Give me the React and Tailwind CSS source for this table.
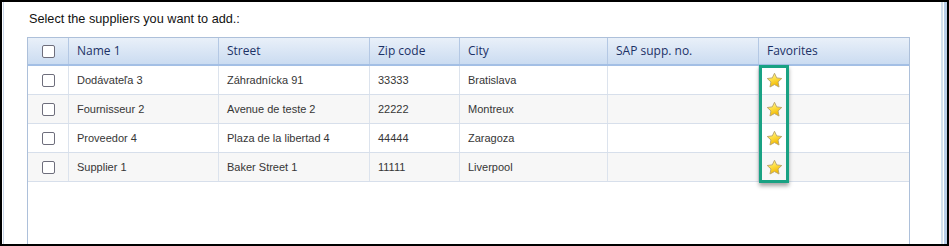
import React from 'react';

const suppliers = [
  { name: 'Dodávateľa 3', street: 'Záhradnícka 91', zip: '33333', city: 'Bratislava' },
  { name: 'Fournisseur 2', street: 'Avenue de teste 2', zip: '22222', city: 'Montreux' },
  { name: 'Proveedor 4', street: 'Plaza de la libertad 4', zip: '44444', city: 'Zaragoza' },
  { name: 'Supplier 1', street: 'Baker Street 1', zip: '11111', city: 'Liverpool' }
];

const cols = 'grid grid-cols-[41px_150px_151px_90px_148px_151px_1fr]';

const Checkbox = () => (
  <span className="block w-[13px] h-[13px] rounded-[2px] border-[1.5px] border-[#6e6e7c] bg-white" />
);

const Star = ({ id }) => (
  <svg width="17" height="17" viewBox="0 0 24 24">
    <defs>
      <linearGradient id={`sg${id}`} x1="0" y1="0" x2="0.4" y2="1">
        <stop offset="0" stopColor="#fff9c4" />
        <stop offset="0.45" stopColor="#ffe34d" />
        <stop offset="1" stopColor="#f2b800" />
      </linearGradient>
    </defs>
    <path
      d="M12 1.8l3.1 6.5 7.1.9-5.2 4.9 1.4 7.1L12 17.7l-6.4 3.5 1.4-7.1-5.2-4.9 7.1-.9z"
      fill={`url(#sg${id})`}
      stroke="#b8a46a"
      strokeWidth="1.3"
      strokeLinejoin="round"
    />
  </svg>
);

const App = () => {
  const headCell = 'flex items-center pl-[8px] border-r border-[#b4c8e4] text-[#1c3166]';
  const bodyCell = 'flex items-center pl-[8px] border-r border-[#dce3ed]';

  return (
    <div className="w-[949px] h-[246px] border-2 border-black bg-white flex overflow-hidden">
      <div className="w-px bg-white" />
      <div className="w-px bg-[#c9d6e8]" />

      <div className="flex-1 flex flex-col" style={{ fontFamily: '"Liberation Sans", Arial, sans-serif' }}>
        <div className="h-[35px] pl-[25px] pt-[10px] text-[12.7px] leading-[15px] text-[#111]">
          Select the suppliers you want to add.:
        </div>

        <div className="relative ml-[23px] w-[883px] flex-1 border-l border-r border-t border-[#adc0da]">
          <div
            className={`${cols} h-[28px] border-b-2 border-[#a3bfe5] bg-gradient-to-b from-[#e9f0f9] to-[#cbdcf1] text-[12px]`}
            style={{ fontFamily: '"Open Sans", "Segoe UI", sans-serif' }}
          >
            <div className="flex items-center justify-center border-r border-[#b4c8e4]">
              <Checkbox />
            </div>
            <div className={headCell}>Name 1</div>
            <div className={headCell}>Street</div>
            <div className={headCell}>Zip code</div>
            <div className={headCell}>City</div>
            <div className={headCell}>SAP supp. no.</div>
            <div className="flex items-center pl-[8px] text-[#1c3166]">Favorites</div>
          </div>

          {suppliers.map((s, i) => (
            <div
              key={s.name}
              className={`${cols} h-[29px] border-b border-[#d7dfeb] text-[11px] text-[#363636] ${i % 2 === 1 ? 'bg-[#f7f7f7]' : 'bg-white'}`}
            >
              <div className="flex items-center justify-center border-r border-[#dce3ed]">
                <Checkbox />
              </div>
              <div className={bodyCell}>{s.name}</div>
              <div className={bodyCell}>{s.street}</div>
              <div className={bodyCell}>{s.zip}</div>
              <div className={bodyCell}>{s.city}</div>
              <div className={bodyCell}></div>
              <div className="flex items-center pl-[7px]">
                <Star id={i} />
              </div>
            </div>
          ))}

          {/* highlight around the favorites column */}
          <div className="absolute left-[731px] top-[27px] w-[30px] h-[118px] border-[3px] border-[#19a283] shadow-[0_3px_4px_rgba(0,0,0,0.35)]" />
        </div>
      </div>

      <div className="w-[2px] bg-[#d3dfee]" />
      <div className="w-px bg-white" />
      <div className="w-[3px] bg-[#b9cde8]" />
    </div>
  );
};

export default App;
